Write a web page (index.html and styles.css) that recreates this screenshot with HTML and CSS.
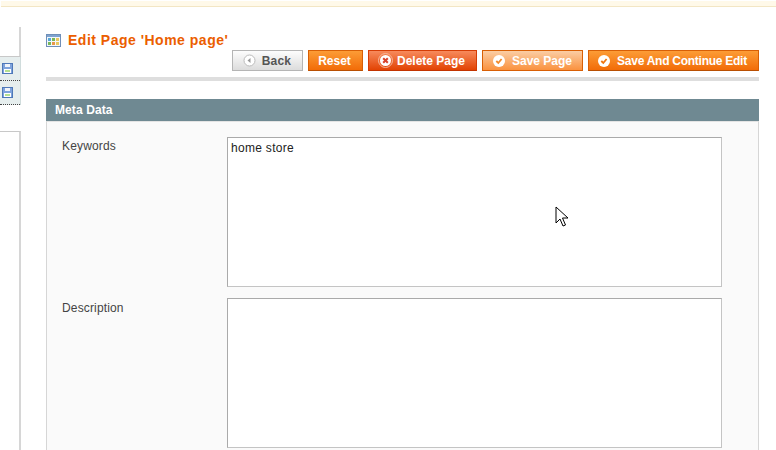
FILE: index.html
```html
<!DOCTYPE html>
<html lang="en">
<head>
<meta charset="utf-8">
<title>Edit Page</title>
<link rel="stylesheet" href="styles.css">
</head>
<body>
<div class="notice"></div>
<div class="layout">
  <aside class="side">
    <div class="side-top"></div>
    <ul class="tabs">
      <li class="tab"><svg width="11" height="11" viewBox="0 0 11 11"><rect x=".5" y=".5" width="10" height="10" fill="#7ea3dc" stroke="#4f78b8"/><rect x="3" y="1" width="5" height="3" fill="#f0f4fa"/><rect x="2" y="6" width="7" height="4" fill="#fff"/><rect x="3" y="7" width="5" height="2" fill="#b4e090"/></svg></li>
      <li class="tab"><svg width="11" height="11" viewBox="0 0 11 11"><rect x=".5" y=".5" width="10" height="10" fill="#7ea3dc" stroke="#4f78b8"/><rect x="3" y="1" width="5" height="3" fill="#f0f4fa"/><rect x="2" y="6" width="7" height="4" fill="#fff"/><rect x="3" y="7" width="5" height="2" fill="#b4e090"/></svg></li>
    </ul>
    <div class="side-bottom"></div>
  </aside>
  <main class="main">
    <h1 class="title">
      <svg class="title-icon" width="15" height="13" viewBox="0 0 15 13"><rect x=".5" y=".5" width="14" height="12" fill="#f4f7fb" stroke="#6f8fb8"/><rect x="1" y="1" width="13" height="2" fill="#7fa3d0"/><rect x="2" y="4" width="3" height="3" fill="#58a8d8"/><rect x="6" y="4" width="3" height="3" fill="#78b858"/><rect x="10" y="4" width="3" height="3" fill="#e8c860"/><rect x="2" y="8" width="3" height="3" fill="#78b858"/><rect x="6" y="8" width="3" height="3" fill="#e89848"/><rect x="10" y="8" width="3" height="3" fill="#e8c860"/></svg>
      Edit Page 'Home page'
    </h1>
    <div class="actions">
      <button class="btn btn-back"><svg width="13" height="13" viewBox="0 0 13 13"><circle cx="6.5" cy="6.5" r="5.500" fill="#fff" stroke="#bbb"/><path d="M7.500 4v5L4.500 6.500z" fill="#999"/></svg>Back</button>
      <button class="btn btn-orange btn-reset">Reset</button>
      <button class="btn btn-delete"><svg width="15" height="15" viewBox="0 0 15 15"><circle cx="7.500" cy="7.500" r="7" fill="none" stroke="#f6b69a"/><circle cx="7.500" cy="7.500" r="5.500" fill="#fff"/><path d="M5.200 5.200l4.600 4.600M9.800 5.200l-4.600 4.600" stroke="#d8432a" stroke-width="2"/></svg>Delete Page</button>
      <button class="btn btn-faded btn-save"><svg width="12" height="12" viewBox="0 0 12 12"><circle cx="6" cy="6" r="6" fill="#fff"/><path d="M3.300 6l2 2 3.300-4" fill="none" stroke="#f28a2c" stroke-width="1.800"/></svg>Save Page</button>
      <button class="btn btn-orange btn-continue"><svg width="12" height="12" viewBox="0 0 12 12"><circle cx="6" cy="6" r="6" fill="#fff"/><path d="M3.300 6l2 2 3.300-4" fill="none" stroke="#f0760f" stroke-width="1.800"/></svg>Save And Continue Edit</button>
    </div>
    <div class="rule"></div>
    <section class="panel">
      <h2 class="panel-head">Meta Data</h2>
      <div class="panel-body">
        <div class="row">
          <label class="label">Keywords</label>
          <div class="field">home store</div>
        </div>
        <div class="row">
          <label class="label label-low">Description</label>
          <div class="field"></div>
        </div>
      </div>
    </section>
  </main>
</div>
<svg class="cursor" width="14" height="22" viewBox="0 0 14 22"><path d="M1 1v16l4-4 3 7 2.500-1-3-7h5.500z" fill="#fff" stroke="#000"/></svg>
</body>
</html>
```
FILE: styles.css
```css
html, body {
  margin: 0;
  padding: 0;
  height: 450px;
  overflow: hidden;
  background: #fff;
  font-family: "Liberation Sans", Arial, sans-serif;
  font-size: 12px;
  color: #333;
}
.notice {
  height: 5px;
  margin: 1px 0 0 1px;
  background: #fff9e9;
  border-bottom: 1px solid #f3e6c4;
}
.layout {
  display: flex;
  height: 443px;
}
.side {
  width: 21px;
  flex: none;
  margin-top: 20px;
  display: flex;
  flex-direction: column;
}
.side-top {
  height: 29px;
  border-right: 2px solid #d6d6d6;
}
.tabs {
  list-style: none;
  margin: 0;
  padding: 0;
  border-top: 1px solid #c8c8c8;
  background: #e6eeee;
  border-right: 1px solid #d0dcdc;
}
.tab {
  height: 24px;
  box-sizing: border-box;
  border-bottom: 1px dotted #444;
  padding: 6px 0 0 2px;
  display: flex;
}
.tab svg { display: block; }
.side-bottom {
  margin-top: 26px;
  flex: 1;
  border-top: 1px solid #c8c8c8;
  border-right: 2px solid #d6d6d6;
}
.main {
  margin-left: 25px;
  width: 713px;
  flex: none;
}
.title {
  margin: 0;
  padding-top: 24px;
  height: 19px;
  font-size: 14px;
  line-height: 19px;
  font-weight: bold;
  color: #eb5e00;
  letter-spacing: .5px;
  display: flex;
  align-items: center;
  gap: 7px;
  white-space: nowrap;
}
.title-icon { flex: none; }
.actions {
  display: flex;
  justify-content: flex-end;
  gap: 5px;
}
.btn {
  height: 21px;
  padding: 0;
  box-sizing: border-box;
  display: flex;
  align-items: center;
  justify-content: center;
  font-family: inherit;
  font-size: 12px;
  font-weight: bold;
  color: #fff;
  white-space: nowrap;
}
.btn svg { flex: none; }
.btn-back {
  width: 71px;
  gap: 6px;
  padding-right: 1px;
  color: #555;
  letter-spacing: .2px;
  border: 1px solid #b5b5b5;
  background: linear-gradient(#fdfdfd, #dcdcdc);
}
.btn-orange {
  border: 1px solid #d85f05;
  border-bottom-color: #b84f02;
  background: linear-gradient(#fc9c36, #f26c08);
}
.btn-reset { width: 55px; padding-right: 2px; }
.btn-delete {
  width: 109px;
  gap: 4px;
  padding-right: 2px;
  border: 1px solid #d53d05;
  border-bottom-color: #c23300;
  background: linear-gradient(#f78a5c, #e24303);
}
.btn-faded {
  border: 1px solid #d85f05;
  background: linear-gradient(#fbcda4, #fa923f);
}
.btn-save { width: 101px; gap: 7px; }
.btn-continue { width: 171px; gap: 7px; padding-right: 2px; letter-spacing: -.26px; }
.rule {
  height: 4px;
  margin-top: 6px;
  background: #dedede;
}
.panel { margin-top: 18px; }
.panel-head {
  margin: 0;
  height: 22px;
  padding-left: 9px;
  background: #6f8992;
  color: #fff;
  font-size: 12px;
  line-height: 22px;
  font-weight: bold;
  letter-spacing: .1px;
}
.panel-body {
  height: 330px;
  box-sizing: border-box;
  padding: 15px 0 0 15px;
  background: #fafafa;
  border-left: 1px solid #d6d6d6;
  border-right: 1px solid #d6d6d6;
  border-top: 1px solid #e4e4e4;
  display: flex;
  flex-direction: column;
  gap: 11px;
}
.row { display: flex; flex: none; }
.label {
  width: 165px;
  flex: none;
  padding-top: 2px;
  line-height: 14px;
  letter-spacing: .15px;
  color: #444;
}
.label-low { padding-top: 3px; }
.field {
  width: 495px;
  height: 150px;
  box-sizing: border-box;
  background: #fff;
  border: 1px solid #c4c4c4;
  border-top-color: #aaa;
  border-left-color: #aaa;
  padding: 3px;
  line-height: 14px;
  color: #222;
  letter-spacing: .3px;
}
.cursor {
  position: absolute;
  left: 555px;
  top: 206px;
}
```
